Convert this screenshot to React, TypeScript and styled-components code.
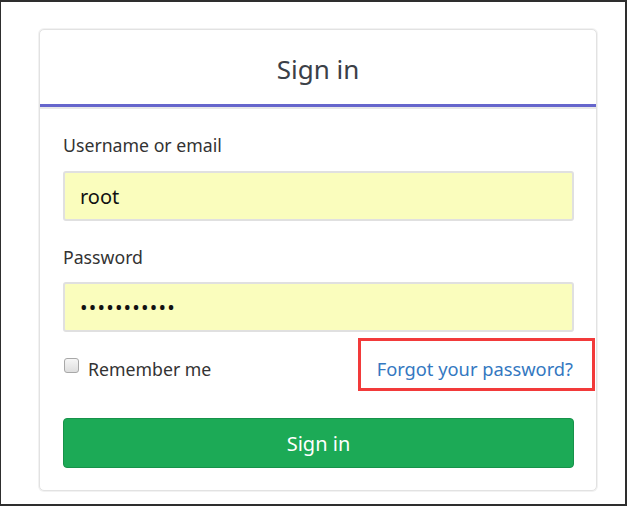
import React from "react";
import styled, { createGlobalStyle } from "styled-components";

const Global = createGlobalStyle`
  html, body { margin: 0; padding: 0; background: #fff; }
  body { font-family: "Noto Sans", "Open Sans", sans-serif; }
  * { box-sizing: border-box; }
`;

const Frame = styled.div`
  width: 627px;
  height: 506px;
  border-top: 2px solid #2e2e2e;
  border-left: 1px solid #2e2e2e;
  border-right: 2px solid #2e2e2e;
  border-bottom: 2px solid #2e2e2e;
  padding: 27px 0 0 38px;
  background: #fff;
`;

const Card = styled.section`
  width: 558px;
  border: 1px solid #e2e2e2;
  border-radius: 5px;
  box-shadow: 0 0 0 1px #f2f2f2;
  background: #fff;
  overflow: hidden;
`;

const Header = styled.header`
  height: 77px;
  display: flex;
  align-items: center;
  justify-content: center;
  padding-top: 3px;
  border-bottom: 3px solid #6666cc;
  font-size: 26px;
  color: #3b4047;
`;

const Body = styled.div`
  border-top: 2px solid #e8e8e8;
  padding: 24px 22px 22px 23px;
  display: flex;
  flex-direction: column;
`;

const Label = styled.label<{ $gap: number }>`
  display: block;
  font-size: 17.7px;
  line-height: 24px;
  color: #333;
  margin-bottom: ${(p) => p.$gap}px;
`;

const Input = styled.input<{ $gap: number; $dots?: boolean }>`
  display: block;
  width: 100%;
  height: 50px;
  border: 2px solid #e0e0e0;
  border-radius: 3px;
  background: #fafdbd;
  padding: 0 15px;
  font-family: "Noto Sans", sans-serif;
  font-size: 20px;
  letter-spacing: ${(p) => (p.$dots ? "1.2px" : "0")};
  color: #111;
  outline: none;
  margin-bottom: ${(p) => p.$gap}px;
`;

const Row = styled.div`
  height: 52px;
  display: flex;
  align-items: center;
  justify-content: space-between;
  padding-top: 7px;
  margin-bottom: 27px;
`;

const Check = styled.label`
  display: flex;
  align-items: center;
  gap: 9px;
  font-size: 17.7px;
  color: #333;
  padding-left: 1px;
`;

const Box = styled.span`
  width: 15px;
  height: 15px;
  border: 1px solid #a8a8a8;
  border-radius: 3px;
  background: linear-gradient(#f6f6f6, #dedede);
  margin-top: -7px;
`;

const LinkWrap = styled.span`
  position: relative;
  margin-right: 1px;
`;

const Link = styled.a`
  font-size: 18.3px;
  color: #3478c1;
  text-decoration: none;
`;

const Highlight = styled.span`
  position: absolute;
  left: -19px;
  right: -22px;
  top: -18px;
  bottom: -10px;
  border: 3px solid #f23a3a;
  pointer-events: none;
`;

const Button = styled.button`
  width: 100%;
  height: 50px;
  border: 1px solid #17924a;
  border-radius: 4px;
  background: #1caa56;
  color: #fff;
  font-family: "Noto Sans", sans-serif;
  font-size: 20px;
  cursor: pointer;
`;

export default function App() {
  return (
    <>
      <Global />
      <Frame>
        <Card>
          <Header>Sign in</Header>
          <Body>
            <Label $gap={14}>Username or email</Label>
            <Input $gap={24} defaultValue="root" />
            <Label $gap={13}>Password</Label>
            <Input $gap={7} $dots type="password" defaultValue="rootpass123" />
            <Row>
              <Check>
                <Box />
                Remember me
              </Check>
              <LinkWrap>
                <Link href="#">Forgot your password?</Link>
                <Highlight />
              </LinkWrap>
            </Row>
            <Button>Sign in</Button>
          </Body>
        </Card>
      </Frame>
    </>
  );
}
